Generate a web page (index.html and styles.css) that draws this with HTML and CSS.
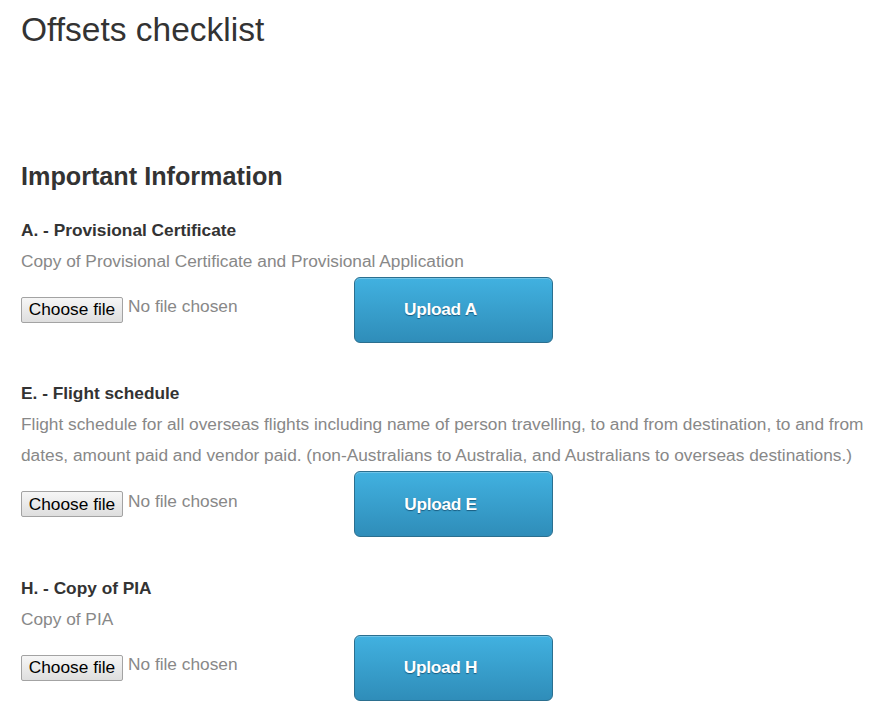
FILE: index.html
```html
<!DOCTYPE html>
<html lang="en">
<head>
<meta charset="utf-8">
<title>Offsets checklist</title>
<link rel="stylesheet" href="styles.css">
</head>
<body>
<div class="page">
  <h1 class="title">Offsets checklist</h1>
  <h2 class="subtitle">Important Information</h2>

  <section class="item">
    <h3 class="item-head">A. - Provisional Certificate</h3>
    <p class="item-desc">Copy of Provisional Certificate and Provisional Application</p>
    <div class="upload-row">
      <div class="file-field">
        <span class="file-btn">Choose file</span>
        <span class="file-name">No file chosen</span>
      </div>
      <button class="upload-btn" type="button">Upload A</button>
    </div>
  </section>

  <section class="item">
    <h3 class="item-head">E. - Flight schedule</h3>
    <p class="item-desc">Flight schedule for all overseas flights including name of person travelling, to and from destination, to and from dates, amount paid and vendor paid. (non-Australians to Australia, and Australians to overseas destinations.)</p>
    <div class="upload-row">
      <div class="file-field">
        <span class="file-btn">Choose file</span>
        <span class="file-name">No file chosen</span>
      </div>
      <button class="upload-btn" type="button">Upload E</button>
    </div>
  </section>

  <section class="item">
    <h3 class="item-head">H. - Copy of PIA</h3>
    <p class="item-desc">Copy of PIA</p>
    <div class="upload-row">
      <div class="file-field">
        <span class="file-btn">Choose file</span>
        <span class="file-name">No file chosen</span>
      </div>
      <button class="upload-btn" type="button">Upload H</button>
    </div>
  </section>
</div>
</body>
</html>
```

FILE: styles.css
```css
html, body {
  margin: 0;
  padding: 0;
  background: #ffffff;
}

body {
  font-family: "Liberation Sans", Arial, sans-serif;
  color: #333333;
}

.page {
  padding: 0 10px 0 21px;
}

.title {
  margin: 10px 0 0 0;
  font-size: 33.5px;
  line-height: 40px;
  font-weight: normal;
  color: #333333;
}

.subtitle {
  margin: 112px 0 0 0;
  font-size: 25.2px;
  line-height: 28px;
  font-weight: bold;
  color: #333333;
}

.item {
  margin-top: 38.3px;
}

.subtitle + .item {
  margin-top: 27.6px;
}

.item-head {
  margin: 0 0 4px 0;
  font-size: 17.3px;
  line-height: 24px;
  font-weight: bold;
  color: #333333;
}

.item-desc {
  margin: 0;
  font-size: 17.3px;
  line-height: 31.5px;
  color: #888888;
}

.upload-row {
  display: flex;
  align-items: center;
  height: 66px;
  margin-top: -0.5px;
}

.file-field {
  width: 333px;
  display: flex;
  align-items: center;
  gap: 5px;
}

.file-btn {
  box-sizing: border-box;
  width: 102px;
  height: 26px;
  display: inline-flex;
  align-items: center;
  justify-content: center;
  font-size: 17.3px;
  color: #000000;
  background: linear-gradient(#f6f6f6, #dedede);
  border: 1px solid #a3a3a3;
  border-radius: 2px;
}

.file-name {
  font-size: 17.3px;
  color: #888888;
  position: relative;
  top: -3px;
}

.upload-btn {
  box-sizing: border-box;
  width: 199px;
  height: 66px;
  padding: 0 26px 0 0;
  font-family: "Liberation Sans", Arial, sans-serif;
  font-size: 17.3px;
  font-weight: bold;
  letter-spacing: -0.3px;
  color: #ffffff;
  text-shadow: 0 1px 1px rgba(0, 40, 70, 0.55);
  background: linear-gradient(#41b1e0, #2f8db9);
  border: 1px solid #2b6f8f;
  border-radius: 6px;
  box-shadow: inset 0 1px 0 rgba(255, 255, 255, 0.25);
}
```
